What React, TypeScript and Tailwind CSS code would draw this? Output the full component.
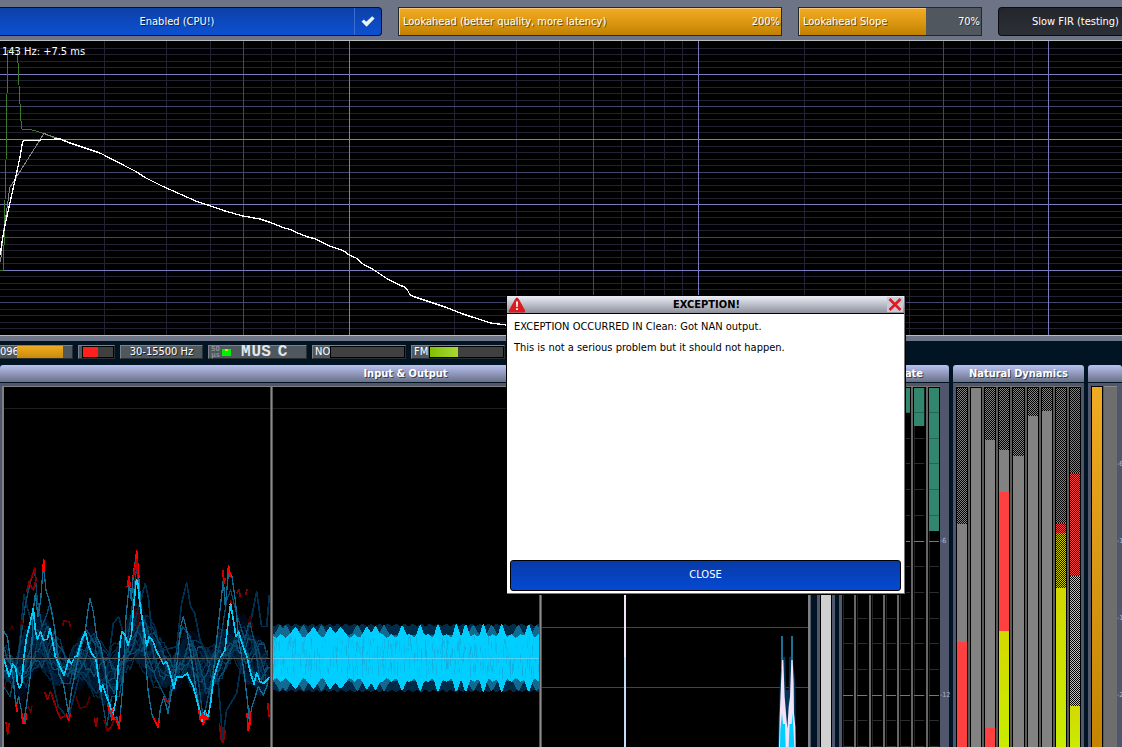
import React from "react";

const FONT = "font-['DejaVu_Sans_Condensed','DejaVu_Sans',sans-serif]";

/* ---------- frequency graph ---------- */

const H_LINES = Array.from({ length: 44 }, (_, n) => n - 4).map((i) => ({
  y: Math.floor(74.2 + i * 6.533) - 41,
  kind: i % 10 === 0 ? 2 : i % 5 === 0 ? 1 : 0,
}));

const V_LINES: [number, number][] = [
  [104, 0], [166, 0], [210, 0], [243, 1], [271, 0], [295, 0], [315, 0], [333, 0], [349, 2],
  [454, 0], [516, 0], [559, 0], [593, 1], [621, 0], [644, 0], [664, 0], [682, 0], [698, 2],
  [804, 0], [865, 0], [909, 0], [943, 1], [970, 0], [994, 0], [1014, 0], [1032, 0], [1048, 2],
];

const LINE_COLORS = ["#222233", "#45446a", "#7a7abe"];

const TAIL =
  "60,139 70,143 85,148 100,153 104,155 125,166 135,171 146,178 162,186 180,194 198,202 208,205 225,211 243,216 260,219 272,223 284,228 289,229 300,234 308,237 316,239 327,245 344,251 349,255 356,258 363,264 374,270 386,278 399,285 405,287 408,291 410,295 415,297 430,302 448,308 460,313 472,317 491,323 506,325";

function Graph() {
  return (
    <div className="relative h-[296px] shrink-0 overflow-hidden border-y border-[#b9bcbc] bg-black">
      <svg
        className="block h-full w-full"
        viewBox="0 0 1122 294"
        preserveAspectRatio="none"
        shapeRendering="crispEdges"
        aria-hidden="true"
      >
        {[0, 1, 2].map((k) => (
          <g key={k} fill={LINE_COLORS[k]}>
            {H_LINES.filter((l) => l.kind === k).map((l) => (
              <rect key={"h" + l.y} x="0" y={l.y} width="1122" height="1" />
            ))}
            {V_LINES.filter((l) => l[1] === k).map((l) => (
              <rect key={"v" + l[0]} x={l[0]} y="0" width="1" height="294" />
            ))}
          </g>
        ))}
        <g transform="translate(0 -41)" fill="none" strokeWidth="1">
          <polyline
            stroke="#3d7a2c"
            points={"0,270.5 3.5,270.5 4.5,220 5.5,180 6.5,140 7.5,50.5 17.5,50.5 18.5,75 19.5,95 20.5,112 21.5,129 30,129.5 36,131 45,134 55,138 " + TAIL}
          />
          <polyline stroke="#858585" points="0.5,262 3,235 8.5,198 9.5,188 44,133.5 60,139" />
          <polyline stroke="#ffffff" strokeWidth="1.3" points={"0.5,255 1.5,245 5,225 11.5,196 15.5,178 20,157 22.5,142 24,140.5 40,140.5 41,139.5 " + TAIL} />
        </g>
      </svg>
      <span className="absolute left-[2px] top-[4px] text-[11px] leading-[14px] text-white">143 Hz: +7.5 ms</span>
    </div>
  );
}

/* ---------- top controls ---------- */

function Slider({ label, value, max, text }: { label: string; value: number; max: number; text: string }) {
  return (
    <label className="relative flex h-[29px] items-center justify-between border border-[#23282c] bg-[#50575e] pl-1 pr-[1px] pt-[2px] text-[11px] text-white">
      <span
        className="absolute inset-y-0 left-0 border-l border-t border-[#f6c873] bg-linear-to-b from-[#f0aa22] via-[#dd9812] to-[#bf8100]"
        style={{ width: (value / max) * 100 + "%" }}
      />
      <span className="relative [text-shadow:1px_1px_0_#00000088]">{label}</span>
      <span className="relative [text-shadow:1px_1px_0_#00000088]">{text}</span>
      <input
        type="range"
        aria-label={label}
        min={0}
        max={max}
        defaultValue={value}
        className="absolute inset-0 m-0 h-full w-full cursor-pointer opacity-0"
      />
    </label>
  );
}

function TopBar() {
  return (
    <div className="grid h-10 shrink-0 grid-cols-[382fr_384fr_184fr_124fr] gap-4 bg-[#6d7486] pt-[7px]">
      <button
        type="button"
        aria-pressed="true"
        className="flex h-[29px] items-stretch rounded-r-[4px] border border-l-0 border-[#071033] bg-linear-to-b from-[#0d40a8] to-[#0c51d2] text-[11px] text-white"
      >
        <span className="flex flex-1 items-center justify-center pt-[2px] [text-shadow:1px_1px_0_#00000088]">Enabled (CPU!)</span>
        <span className="flex w-[27px] items-center justify-center border-l border-[#3b6cd0]">
          <svg width="14" height="11" viewBox="0 0 14 11" aria-hidden="true">
            <path d="M0.5 5.5 L3 3.6 L5.2 5.8 L11.2 0.3 L13.6 2.4 L5.6 10.7 Z" fill="#e9f4fb" />
          </svg>
        </span>
      </button>
      <Slider label="Lookahead (better quality, more latency)" value={200} max={200} text="200%" />
      <Slider label="Lookahead Slope" value={70} max={100} text="70%" />
      <button
        type="button"
        className="h-[29px] rounded-l-[4px] border border-r-0 border-[#0b0d10] bg-linear-to-b from-[#23262b] to-[#2c3036] pl-[33px] pt-[2px] text-left text-[11px] whitespace-nowrap text-white"
      >
        Slow FIR (testing)
      </button>
    </div>
  );
}

/* ---------- status strip ---------- */

const BOX = "flex h-[14px] items-center border border-t-[#7b8187] border-l-[#7b8187] border-r-[#2a2f33] border-b-[#2a2f33] bg-[#50585f]";

function LabelledMeter({ label, level }: { label: string; level: number }) {
  return (
    <div className={BOX + " w-[94px]"}>
      <span className="w-[17px] pl-[2px]">{label}</span>
      <span className="h-[12px] flex-1 border border-black bg-[#404040]">
        <span className="block h-full bg-linear-to-r from-[#7fc000] to-[#a9d930]" style={{ width: level + "%" }} />
      </span>
    </div>
  );
}

function StatusStrip() {
  return (
    <div className="flex h-[29px] shrink-0 flex-col bg-[#001424]">
      <div className="h-[5px] shrink-0 bg-[#6d7486]" />
      <div className="mt-[4px] flex gap-[5px] text-[11px] leading-[12px] text-white">
        <div className={BOX + " w-[73px] border-l-0"}>
          <span className="w-[17px]">096</span>
          <span className="h-full w-[46px] bg-linear-to-b from-[#f0aa22] to-[#c98b08]" />
        </div>
        <div className={BOX + " w-[37px] pl-[3px]"}>
          <span className="flex h-[12px] flex-1 border border-black bg-[#404040]">
            <span className="w-1/2 bg-[#ff2020]" />
          </span>
        </div>
        <div className={BOX + " w-[83px] justify-center [text-shadow:1px_1px_0_#000000aa]"}>30-15500 Hz</div>
        <div className={BOX + " w-[99px]"}>
          <span className="w-[13px] text-center text-[7px] leading-[6px] font-bold text-[#8b9196]">
            50<br />µs
          </span>
          <span className="relative h-[7px] w-[9px] bg-[#00f200]">
            <span className="absolute left-[3px] top-0 h-[2px] w-[3px] bg-[#e8d800]" />
          </span>
          <span className="ml-[10px] flex flex-1 font-['Liberation_Mono',monospace] text-[16px] leading-[12px] font-bold text-[#e4e7e9]">
            <span className="pr-px">M</span>
            <span>U</span>
            <span className="pr-[7px]">S</span>
            <span>C</span>
          </span>
        </div>
        <LabelledMeter label="NO" level={0} />
        <LabelledMeter label="FM" level={39} />
      </div>
    </div>
  );
}

/* ---------- scopes ---------- */

function noise(seed: number) {
  let s = seed;
  return () => {
    s = (s * 16807) % 2147483647;
    return s / 2147483647;
  };
}

/* Rest shape shared by the older, faded traces. */
const REST: [number, number][] = [
  [12, 380], [50, 430], [100, 290], [140, 300], [200, 420], [260, 330], [330, 450], [370, 330],
  [410, 250], [450, 320], [510, 420], [560, 330], [610, 430], [660, 370], [690, 270], [740, 340], [808, 410],
];

function restAt(x: number) {
  for (let i = 1; i < REST.length; i++) {
    const [x0, y0] = REST[i - 1];
    const [x1, y1] = REST[i];
    if (x <= x1) return y0 + ((y1 - y0) * (x - x0)) / (x1 - x0);
  }
  return 400;
}

const FADED = Array.from({ length: 24 }, (_, n) => {
  const rnd = noise(n * 7919 + 31);
  rnd();
  const a = rnd() * 6;
  const b = rnd() * 6;
  const c = rnd() * 60 - 30;
  const amp = 0.5 + rnd() * 0.9;
  const pts: string[] = [];
  for (let x = 12; x <= 808; x += 6) {
    const y =
      360 + (restAt(x + c) - 360) * amp +
      Math.sin(x / 31 + a) * 45 * amp + Math.sin(x / 14 + b) * 30 + (rnd() - 0.5) * 20;
    pts.push(x + "," + Math.round(y));
  }
  return pts.join(" ");
});

const FADED_COLORS = ["#00081a", "#000c20", "#001026", "#001a34", "#002440", "#002c4a", "#003a58", "#0b4a6b"];

const CYAN_MAIN =
  "12,358 20,385 28,410 38,372 48,385 52,425 58,445 65,430 72,350 80,290 90,250 100,205 106,270 112,298 122,275 130,300 142,298 150,265 158,305 166,350 175,368 182,385 192,405 200,380 206,358 214,372 225,350 232,348 245,300 256,275 266,318 275,340 288,358 295,410 302,455 308,435 318,465 328,490 338,525 348,480 354,390 360,310 366,275 375,285 384,315 394,285 400,210 408,125 414,135 420,195 432,270 440,318 448,290 460,305 468,330 480,352 490,372 500,365 508,390 522,445 530,410 545,412 562,400 570,420 578,435 588,470 598,510 606,545 614,512 624,530 632,490 640,420 650,385 660,355 675,330 685,240 692,192 700,240 708,290 716,275 726,310 740,348 752,400 762,432 770,398 780,425 792,430 808,412";

const TEAL: string[] = [
  "12,275 22,290 30,350 40,420 48,500 56,470 66,520 72,545 80,490 92,400 100,210 106,160 114,230 122,180 130,75 138,150 150,190 160,240 168,300 176,400 190,430 205,520 215,450 240,330 255,280 264,210 270,175 280,215 290,290 300,310 315,380 325,480 335,540 350,530 358,560 368,440 378,230 388,130 394,180 400,100 410,40 416,110 424,210 434,330 444,450 455,520 466,545 474,560 482,500 492,470 504,520 512,470 530,380 542,260 550,230 560,270 575,360 590,460 605,540 625,535 638,420 650,300 662,190 670,120 676,200 686,90 696,110 706,180 716,300 730,380 742,480 748,540 756,500 775,440 790,465 804,430",
  "12,440 30,470 55,350 75,200 90,130 104,90 112,180 126,260 138,230 150,190 165,270 185,430 210,430 232,330 260,270 285,310 300,440 320,560 335,470 358,470 375,350 392,240 402,150 410,80 420,190 440,340 470,420 505,490 530,330 548,260 570,290 590,380 610,540 640,390 660,310 680,180 692,150 712,230 735,300 748,240 762,300 780,420 808,380",
  "12,400 40,440 60,300 72,165 84,210 110,300 150,390 175,500 205,535 240,400 290,460 320,400 340,250 356,230 370,280 400,260 436,130 446,180 456,290 490,330 530,320 545,190 560,128 572,200 584,220 600,300 630,360 655,430 668,600 680,510 710,460 735,300 755,230 770,155 785,260 800,260 808,165",
];

const RED: { d: string; c: string }[] = [
  { c: "#ff0000", d: "128,95 131,60 134,95" },
  { c: "#e00000", d: "382,140 387,110 391,140" },
  { c: "#ff0000", d: "402,95 406,70 410,32 414,80 417,115" },
  { c: "#c00000", d: "400,110 406,80 411,60 413,120" },
  { c: "#d00000", d: "668,90 672,130 676,115" },
  { c: "#ff0000", d: "682,105 686,78 691,110" },
  { c: "#8a0000", d: "80,155 88,125 96,110 104,85 108,120 100,150 88,130" },
  { c: "#8a0000", d: "710,160 717,148 721,170" },
  { c: "#8a0000", d: "737,165 741,148" },
  { c: "#700000", d: "188,258 192,243 207,245 211,260" },
  { c: "#500000", d: "398,240 404,210 411,205 418,225 412,260" },
  { c: "#8a0000", d: "690,182 696,190" },
  { c: "#3a0000", d: "30,270 36,258 42,272" },
  { c: "#3a0000", d: "60,255 66,243 72,262" },
  { c: "#3a0000", d: "745,250 750,230 758,262" },
  { c: "#3a0000", d: "12,430 18,445 M30,440" },
  { c: "#a00000", d: "18,545 23,582 28,548" },
  { c: "#ff0000", d: "48,490 52,515" },
  { c: "#ff0000", d: "66,520 68,550 76,550 79,520" },
  { c: "#700000", d: "84,500 92,515 96,498" },
  { c: "#900000", d: "134,455 142,478 152,455 164,490 174,520 182,535 195,528" },
  { c: "#e00000", d: "198,520 206,542 212,518" },
  { c: "#500000", d: "228,470 240,505 258,500 270,470" },
  { c: "#900000", d: "283,530 288,560 293,530" },
  { c: "#700000", d: "312,540 322,572 334,560 342,540" },
  { c: "#ff0000", d: "322,490 330,520 338,508 336,535 350,540 357,566 362,520" },
  { c: "#ff0000", d: "459,530 466,545 474,563 479,530" },
  { c: "#b00000", d: "494,470 499,485 507,480" },
  { c: "#ff0000", d: "596,510 601,540 606,520 609,552 614,515 622,538 628,525" },
  { c: "#8a0000", d: "658,550 664,600 670,608 676,570" },
  { c: "#ff0000", d: "741,520 745,572 752,540 748,505" },
  { c: "#b00000", d: "803,490 807,530" },
].map((r) => ({ ...r, d: r.d.split(" M")[0] }));

function WaveScope() {
  return (
    <svg
      className="block h-full w-full"
      viewBox="0 0 266 360"
      preserveAspectRatio="none"
      shapeRendering="crispEdges"
      aria-hidden="true"
    >
      <rect x="0" y="21" width="266" height="1" fill="#1d1d1d" />
      <g transform="translate(-4 153) scale(0.33333)" fill="none" strokeLinejoin="round">
        {FADED.map((p, i) => (
          <polyline key={i} points={p} stroke={FADED_COLORS[Math.floor(i / 3)]} strokeWidth={i < 12 ? 14 : 4} />
        ))}
        <polyline points={TEAL[2]} stroke="#00304f" strokeWidth="5" />
        <polyline points={TEAL[1]} stroke="#084a6b" strokeWidth="4" />
        <polyline points={TEAL[0]} stroke="#126c92" strokeWidth="4" />
        {RED.map((r, i) => (
          <polyline key={i} points={r.d} stroke={r.c} strokeWidth="5" />
        ))}
        <polyline points={CYAN_MAIN} stroke="#00ccfa" strokeWidth="5" />
        <path d="M322 490L330 520L340 508M334 515L342 538M596 510L601 540L609 520L611 550L618 515" stroke="#ff0000" strokeWidth="5" />
        <path d="M406 132L410 118L414 132M688 194L697 194" stroke="#b090c0" strokeWidth="4" />
      </g>
      <rect x="0" y="271" width="266" height="1" fill="#5c5c5c" />
    </svg>
  );
}

const BRIGHT = [105, 160, 212, 242, 322, 348, 428, 482, 535, 590, 618, 670, 725, 805];
const MIDTONE = [60, 77, 130, 185, 292, 372, 640, 695, 775, 830];

function bump(list: number[], x: number, w: number) {
  return Math.max(...list.map((c) => Math.exp(-(((x - c) / w) ** 2))));
}

function bandPath(height: (x: number) => number) {
  const up: string[] = [];
  const down: string[] = [];
  for (let x = 0; x <= 266; x += 1) {
    const h = height(x * 3 + 39) / 3;
    up.push(x + "," + (271 - h).toFixed(1));
    down.unshift(x + "," + (271 + h).toFixed(1));
  }
  return up.concat(down).join(" ");
}

const OUTER_BAND = bandPath((x) => 99 + Math.sin(x / 4) * 3);
const MID_BAND = bandPath((x) => 70 + 29 * bump(MIDTONE, x, 11));
const CORE_BAND = bandPath((x) => 66 + 5 * Math.sin(x / 4.4) + 31 * bump(BRIGHT, x, 10));

const STREAKS = (() => {
  const rnd = noise(4242);
  return Array.from({ length: 420 }, () => ({
    x: Math.floor(rnd() * 266),
    y: Math.floor(249 + rnd() * 34),
    h: Math.floor(3 + rnd() * 9),
    o: 0.15 + rnd() * 0.5,
  }));
})();

function BandScope() {
  return (
    <svg
      className="block h-full w-full"
      viewBox="0 0 266 360"
      preserveAspectRatio="none"
      shapeRendering="crispEdges"
      aria-hidden="true"
    >
      <rect x="0" y="21" width="266" height="1" fill="#1d1d1d" />
      <polygon points={OUTER_BAND} fill="#002b49" />
      <polygon points={MID_BAND} fill="#126a90" />
      <polygon points={CORE_BAND} fill="#00ceff" />
      {STREAKS.map((s, i) => (
        <rect key={i} x={s.x} y={s.y} width="1" height={s.h} fill="#1f9fce" opacity={s.o} />
      ))}
      <rect x="0" y="271" width="266" height="1" fill="#55d4fa" />
    </svg>
  );
}

function SpectrumScope() {
  return (
    <svg className="block h-full w-full" viewBox="0 0 266 360" preserveAspectRatio="none" aria-hidden="true">
      {[60, 120, 180, 240, 300].map((y) => (
        <rect key={y} x="0" y={y} width="266" height="1" fill="#444444" />
      ))}
      <rect x="82" y="0" width="2" height="270" fill="#f3e2f8" />
      <rect x="82" y="270" width="2" height="90" fill="#c4dcf8" />
      <g transform="translate(-42 153) scale(0.33333)">
        <path d="M834 621L836 540L840 430L846 350L856 350L858 450L866 450L868 350L878 350L886 430L888 621Z" fill="#003557" />
        <path d="M843 288h6v100h-6zM873 288h6v100h-6z" fill="#1a7196" />
        <path d="M837 621L839 530L843 430L846 360L850 360L854 470L858 520L862 566L866 500L870 470L874 360L878 360L881 430L882 520L886 560L887 621Z" fill="#f2e2f8" />
        <path d="M840 621L841 570L846 520L849 552L855 552L857 621ZM866 621L869 552L875 552L877 518L880 560L883 621Z" fill="#00ceff" />
      </g>
    </svg>
  );
}

/* ---------- panels ---------- */

function Panel({ title, className, align, children }: { title: string; className: string; align?: string; children?: React.ReactNode }) {
  return (
    <section className={"flex min-h-0 flex-col " + className}>
      <h2
        className={
          "flex h-[17px] shrink-0 items-center overflow-hidden rounded-t-[3px] bg-linear-to-b from-[#b9c2f2] to-[#6b7189] text-[11px] leading-[16px] font-bold whitespace-nowrap text-white [text-shadow:1px_1px_0_#3a3f55] " +
          (align ?? "justify-center")
        }
      >
        {title}
      </h2>
      <div className="mt-px flex min-h-0 flex-1 bg-[#50566c] pt-[3px]">{children}</div>
    </section>
  );
}

function Segment({ color, height }: { color: string; height?: number }) {
  return <div className={color + (height === undefined ? " flex-1" : " shrink-0")} style={height === undefined ? undefined : { height }} />;
}

const GREY = "bg-[#828282]";
const RED_FILL = "bg-[#ff4040]";
const LIME = "bg-linear-to-b from-[#d3d800] to-[#c8ec00]";
const CHECK = "bg-[repeating-conic-gradient(#828282_0_25%,#000000_0_50%)] bg-[length:2px_2px]";
const CHECK_RED = "bg-[repeating-conic-gradient(#ff4040_0_25%,#000000_0_50%)] bg-[length:2px_2px]";
const CHECK_LIME = "bg-[repeating-conic-gradient(#d8d800_0_25%,#000000_0_50%)] bg-[length:2px_2px]";

const BARS: [string, number?][][] = [
  [[CHECK, 136], [GREY, 118], [RED_FILL]],
  [[GREY]],
  [[CHECK, 52], [GREY, 288], [RED_FILL]],
  [[CHECK, 62], [GREY, 42], [RED_FILL, 139], [LIME]],
  [[CHECK, 68], [GREY]],
  [[CHECK, 28], [GREY]],
  [[CHECK, 23], [GREY]],
  [[CHECK, 135], [CHECK_RED, 10], [CHECK_LIME, 55], [LIME]],
  [[CHECK, 85], [CHECK_RED, 103], [CHECK_LIME, 130], [LIME]],
];

function DynamicsBars() {
  return (
    <div className="mx-[3px] grid flex-1 grid-cols-9 gap-[2px] border-t border-[#77776f] bg-[#5a5a58]">
      {BARS.map((bar, i) => (
        <div key={i} className="flex flex-col border-x border-t border-black">
          {bar.map(([color, height], j) => (
            <Segment key={j} color={color} height={height} />
          ))}
        </div>
      ))}
    </div>
  );
}

const GATE = [0, 0, 0, 0, 25, 38, 143];
const TICKS = Array.from({ length: 14 }, (_, n) => ({ y: Math.round(24 + n * 25.7), bright: n % 6 === 5 }));

function GateColumns() {
  return (
    <>
      <div className="ml-[3px] grid w-[98px] shrink-0 grid-cols-7 gap-[2px] border-t border-[#77776f] bg-[#666666]">
        {GATE.map((level, i) => (
          <div key={i} className="relative overflow-hidden border-x border-t border-black bg-black">
            <svg className="absolute inset-0 h-full w-full" aria-hidden="true">
              <rect x="0" y="0" width="1" height="100%" fill="#222222" />
              <rect x="0" y="0" width="100%" height={level} fill="#32866e" />
              {TICKS.map((t) => (
                <rect
                  key={t.y}
                  x="0"
                  y={t.y}
                  width="100%"
                  height="1"
                  fill={t.y < level ? "#256653" : t.bright ? "#777777" : "#2c2c2c"}
                />
              ))}
            </svg>
          </div>
        ))}
      </div>
      <div className="flex flex-1 flex-col pt-[150px] text-[7px] leading-[10px] text-[#b4b8c4]">
        <span className="mb-[144px]">-6</span>
        <span>-12</span>
      </div>
    </>
  );
}

function OutputMeter() {
  return (
    <>
      <div className="ml-[3px] w-[12px] shrink-0 border border-b-0 border-black bg-linear-to-b from-[#f0aa22] to-[#c48400]" />
      <div className="ml-px w-[13px] shrink-0 border-t border-[#8a8a88] bg-[#6e6e6e]" />
      <div className="flex flex-1 flex-col gap-[67px] overflow-hidden pt-[73px] text-[7px] leading-[10px] whitespace-nowrap text-[#b4b8c4]">
        <span>-6</span>
        <span>-1</span>
        <span>-1</span>
        <span>-2</span>
      </div>
    </>
  );
}

function Panels() {
  return (
    <main className="flex min-h-0 flex-1 gap-1 bg-[#001424]">
      <Panel title="Input & Output" className="mr-[2px] min-w-0 flex-1">
        <div className="ml-[2px] mr-px flex min-w-0 flex-1 border-x-2 border-t border-[#808080] bg-black">
          <div className="min-w-0 flex-1"><WaveScope /></div>
          <div className="w-[3px] shrink-0 border-x border-[#555555] bg-[#8a8a8a]" />
          <div className="min-w-0 flex-1"><BandScope /></div>
          <div className="w-[3px] shrink-0 border-x border-[#555555] bg-[#8a8a8a]" />
          <div className="min-w-0 flex-1"><SpectrumScope /></div>
        </div>
      </Panel>
      <Panel title="" className="w-[18px] shrink-0">
        <div className="mx-[3px] flex-1 border-x border-black bg-[#d0d0d0]" />
      </Panel>
      <Panel title="ate" className="w-[110px] shrink-0" align="justify-end pr-[26px]">
        <GateColumns />
      </Panel>
      <Panel title="Natural Dynamics" className="w-[131px] shrink-0">
        <DynamicsBars />
      </Panel>
      <Panel title="" className="w-[34px] shrink-0">
        <OutputMeter />
      </Panel>
    </main>
  );
}

/* ---------- dialog ---------- */

function ExceptionDialog() {
  return (
    <div
      role="alertdialog"
      aria-labelledby="exception-title"
      className="absolute left-[507px] top-[296px] flex h-[298px] w-[398px] flex-col border-r border-b border-[#777777] bg-white text-[11px] text-black outline outline-black"
    >
      <div className="flex h-[18px] shrink-0 items-center justify-between border-b border-black bg-linear-to-b from-[#eceef8] to-[#8f929c] pl-px pr-px">
        <svg width="18" height="16" viewBox="0 0 18 16" aria-hidden="true">
          <path d="M9 0.5Q10 0.5 10.8 2L17 13.2Q17.8 15.5 15.5 15.5H2.5Q0.2 15.5 1 13.2L7.2 2Q8 0.5 9 0.5Z" fill="#d91c20" />
          <path d="M8 4.5H10L9.7 10H8.3ZM8.1 11.3H9.9V13.1H8.1Z" fill="#ffffff" />
        </svg>
        <h1 id="exception-title" className="pt-px text-[11px] leading-[16px] font-bold">EXCEPTION!</h1>
        <button type="button" aria-label="Close window" className="flex h-[15px] w-[16px] items-center justify-center bg-[#c9cbd8]">
          <svg width="14" height="13" viewBox="0 0 14 13" aria-hidden="true">
            <path d="M1.5 1L12.5 12M12.5 1L1.5 12" stroke="#e3191c" strokeWidth="2.6" />
          </svg>
        </button>
      </div>
      <div className="flex flex-1 flex-col gap-[7px] pl-[7px] pt-[6px] leading-[14px]">
        <p>EXCEPTION OCCURRED IN Clean: Got NAN output.</p>
        <p>This is not a serious problem but it should not happen.</p>
      </div>
      <button
        type="button"
        className="mx-[3px] mb-[2px] h-[31px] shrink-0 rounded-[3px] border border-black bg-linear-to-b from-[#083ba8] to-[#0449d2] text-white"
      >
        CLOSE
      </button>
    </div>
  );
}

export default function App() {
  return (
    <div className={"relative flex h-screen flex-col overflow-hidden bg-[#001424] " + FONT}>
      <TopBar />
      <Graph />
      <StatusStrip />
      <Panels />
      <ExceptionDialog />
    </div>
  );
}
